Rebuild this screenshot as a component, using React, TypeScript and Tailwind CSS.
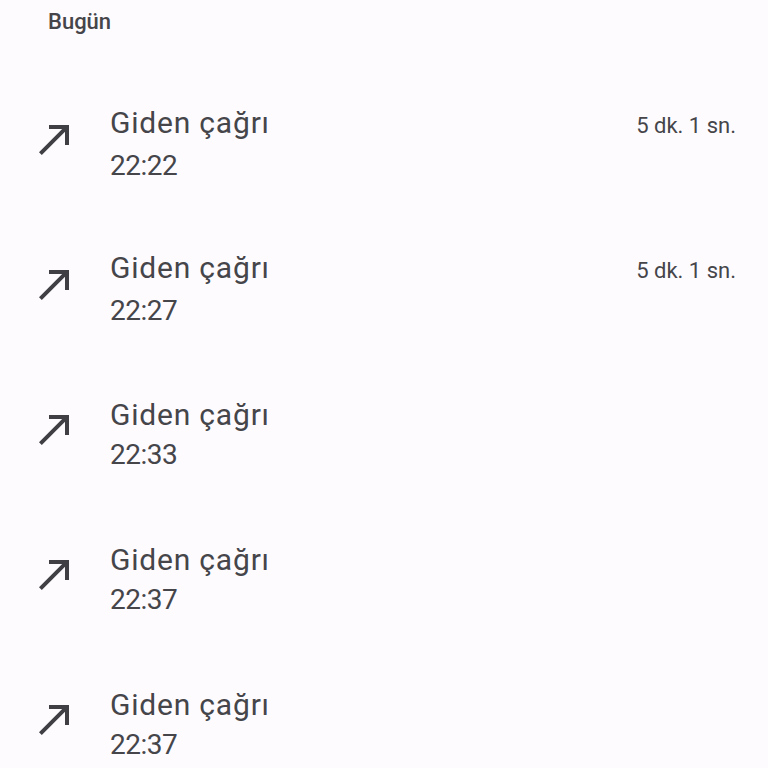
import React from 'react';

const calls = [
  { time: '22:22', duration: '5 dk. 1 sn.' },
  { time: '22:27', duration: '5 dk. 1 sn.' },
  { time: '22:33', duration: '' },
  { time: '22:37', duration: '' },
  { time: '22:37', duration: '' },
];

function CallMadeIcon() {
  return (
    <svg viewBox="0 0 24 24" width="48" height="48" fill="#3f3f44" className="mb-[12px] shrink-0">
      <path d="M9 5v2h6.59L4 18.59 5.41 20 17 8.41V15h2V5z" />
    </svg>
  );
}

export default function App() {
  return (
    <div
      className="h-[768px] w-[768px] overflow-hidden bg-[#fdfbfe] text-[#45454a]"
      style={{ fontFamily: 'Roboto, "Noto Sans", sans-serif' }}
    >
      <div className="h-[72px] pl-[48px] pt-[7px] text-[22px] font-medium leading-[30px]">Bugün</div>
      {calls.map((call, i) => (
        <div key={i} className="flex h-[145px] items-center pl-[31px] pr-[32px]">
          <CallMadeIcon />
          <div className="ml-[31px] flex flex-1 flex-col">
            <div className="flex items-baseline justify-between">
              <span className="text-[30px] leading-[40px] tracking-[0.8px]">Giden çağrı</span>
              <span className="text-[22px] leading-[40px]">{call.duration}</span>
            </div>
            <span className="text-[28px] leading-[40px] tracking-[-0.5px]">{call.time}</span>
          </div>
        </div>
      ))}
    </div>
  );
}
